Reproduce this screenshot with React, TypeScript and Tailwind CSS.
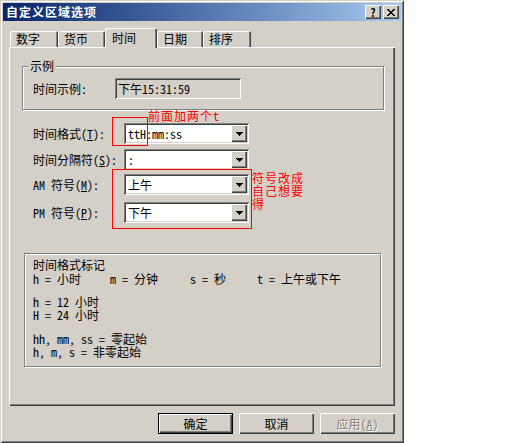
import type { FC, ReactNode } from "react";

const raised =
  "shadow-[inset_1px_1px_0_#fff,inset_-1px_-1px_0_#404040,inset_-2px_-2px_0_#808080]";
const sunken =
  "shadow-[inset_1px_1px_0_#808080,inset_-1px_-1px_0_#fff,inset_2px_2px_0_#404040,inset_-2px_-2px_0_#d4d0c8]";
const etched = "border border-[#808080] shadow-[inset_1px_1px_0_#fff,1px_1px_0_#fff]";

const TitleButton: FC<{ children: ReactNode }> = ({ children }) => (
  <div className={`flex h-[14px] w-[16px] items-center justify-center bg-[#d4d0c8] ${raised}`}>
    {children}
  </div>
);

const Arrow: FC = () => (
  <svg width="7" height="4" viewBox="0 0 7 4" shapeRendering="crispEdges">
    <rect x="0" y="0" width="7" height="1" fill="#000" />
    <rect x="1" y="1" width="5" height="1" fill="#000" />
    <rect x="2" y="2" width="3" height="1" fill="#000" />
    <rect x="3" y="3" width="1" height="1" fill="#000" />
  </svg>
);

const Combo: FC<{ value: string }> = ({ value }) => (
  <div className={`flex h-[21px] w-[125px] items-center bg-white p-[2px] ${sunken}`}>
    <span className="flex-1 pl-[2px] text-[12px] leading-none">{value}</span>
    <div className={`flex h-[17px] w-[16px] items-center justify-center bg-[#d4d0c8] ${raised}`}>
      <Arrow />
    </div>
  </div>
);

type Tab = { label: string; width: string; active?: boolean };

const tabs: Tab[] = [
  { label: "数字", width: "w-[48px]" },
  { label: "货币", width: "w-[47px]" },
  { label: "时间", width: "w-[52px]", active: true },
  { label: "日期", width: "w-[46px]" },
  { label: "排序", width: "w-[48px]" },
];

const FieldRow: FC<{ label: ReactNode; value: string; gap: string }> = ({ label, value, gap }) => (
  <div className={`flex h-[21px] items-center ${gap}`}>
    <span className="w-[91px] text-[12px] leading-none">{label}</span>
    <Combo value={value} />
  </div>
);

const Button: FC<{ children: ReactNode; primary?: boolean; disabled?: boolean }> = ({
  children,
  primary,
  disabled,
}) => (
  <div
    className={`flex h-[21px] w-[75px] items-center justify-center bg-[#d4d0c8] text-[12px] leading-none ${
      primary
        ? "shadow-[inset_0_0_0_1px_#000,inset_2px_2px_0_#fff,inset_-2px_-2px_0_#404040,inset_-3px_-3px_0_#808080]"
        : raised
    } ${disabled ? "text-[#808080] [text-shadow:1px_1px_0_#fff]" : "text-black"}`}
  >
    {children}
  </div>
);

export default function App() {
  return (
    <div className="min-h-[443px] bg-white font-[family-name:'Noto_Sans_Mono_CJK_SC','Noto_Sans_CJK_SC',sans-serif] text-black">
      <div className="relative flex h-[443px] w-[404px] flex-col bg-[#d4d0c8] p-[3px] shadow-[inset_1px_1px_0_#d4d0c8,inset_-1px_-1px_0_#404040,inset_2px_2px_0_#fff,inset_-2px_-2px_0_#808080]">
        {/* title bar */}
        <div className="flex h-[18px] items-center bg-linear-to-r from-[#0a246a] to-[#a6caf0] pl-[3px] pr-[2px]">
          <span className="text-[12px] font-bold leading-none tracking-[1px] text-white">自定义区域选项</span>
          <div className="ml-auto flex gap-[2px]">
            <TitleButton>
              <span className="text-[11px] font-bold leading-none">?</span>
            </TitleButton>
            <TitleButton>
              <svg width="8" height="7" viewBox="0 0 8 7" shapeRendering="crispEdges">
                <path
                  d="M0 0h2v1h-2zM6 0h2v1h-2zM1 1h2v1h-2zM5 1h2v1h-2zM2 2h4v1h-4zM3 3h2v1h-2zM2 4h4v1h-4zM1 5h2v1h-2zM5 5h2v1h-2zM0 6h2v1h-2zM6 6h2v1h-2z"
                  fill="#000"
                />
              </svg>
            </TitleButton>
          </div>
        </div>

        {/* tabs */}
        <div className="mx-[6px] mt-[7px] flex h-[19px] items-end pl-[1px]">
          {tabs.map((t) => (
            <div
              key={t.label}
              className={`${t.width} flex items-center bg-[#d4d0c8] pl-[6px] text-[12px] leading-none rounded-t-[2px] shadow-[inset_1px_1px_0_#fff,inset_-1px_0_0_#404040,inset_-2px_0_0_#808080] ${
                t.active ? "relative z-10 -mb-px h-[20px] pl-[7px]" : "h-[16px]"
              }`}
            >
              {t.label}
            </div>
          ))}
        </div>

        {/* panel */}
        <div className={`mx-[6px] flex h-[359px] flex-col ${raised}`}>
          <div className={`relative ml-[13px] mt-[19px] h-[44px] w-[362px] ${etched}`}>
            <span className="absolute left-[5px] top-[-7px] bg-[#d4d0c8] px-[2px] text-[12px] leading-none">示例</span>
            <div className="flex items-center pl-[10px] pt-[11px]">
              <span className="w-[82px] text-[12px] leading-none">时间示例:</span>
              <div className={`flex h-[21px] w-[126px] items-center pl-[3px] text-[12px] leading-none ${sunken}`}>
                下午15:31:59
              </div>
            </div>
          </div>

          <div className="mt-[13px] flex flex-col pl-[24px]">
            <FieldRow
              gap=""
              label={
                <>
                  时间格式(<u>T</u>):
                </>
              }
              value="ttH:mm:ss"
            />
            <FieldRow
              gap="mt-[5px]"
              label={
                <>
                  时间分隔符(<u>S</u>):
                </>
              }
              value=":"
            />
            <FieldRow
              gap="mt-[4px]"
              label={
                <>
                  AM 符号(<u>M</u>):
                </>
              }
              value="上午"
            />
            <FieldRow
              gap="mt-[7px]"
              label={
                <>
                  PM 符号(<u>P</u>):
                </>
              }
              value="下午"
            />
          </div>

          <div className={`ml-[15px] mt-[30px] h-[114px] w-[357px] pl-[8px] pt-[4px] text-[12px] leading-[13px] ${etched}`}>
            <div>时间格式标记</div>
            <div className="mt-[1px] flex">
              <span className="w-[77px]">h = 小时</span>
              <span className="w-[80px]">m = 分钟</span>
              <span className="w-[67px]">s = 秒</span>
              <span>t = 上午或下午</span>
            </div>
            <div className="mt-[10px]">h = 12 小时</div>
            <div>H = 24 小时</div>
            <div className="mt-[11px]">hh, mm, ss = 零起始</div>
            <div>h, m, s = 非零起始</div>
          </div>
        </div>

        {/* buttons */}
        <div className="mr-[6px] mt-[7px] flex justify-end gap-[6px]">
          <Button primary>确定</Button>
          <Button>取消</Button>
          <Button disabled>
            应用(<u>A</u>)
          </Button>
        </div>

        {/* red annotations */}
        <div className="absolute left-[112px] top-[117px] h-[29px] w-[36px] border border-[#ff0000]" />
        <span className="absolute left-[148px] top-[109px] text-[12px] leading-[13px] tracking-[1px] text-[#ff0000]">
          前面加两个t
        </span>
        <div className="absolute left-[112px] top-[169px] h-[60px] w-[140px] border border-[#ff0000]" />
        <span className="absolute left-[252px] top-[171px] text-[12px] leading-[13px] tracking-[1px] text-[#ff0000]">
          符号改成
          <br />
          自己想要
          <br />得
        </span>
      </div>
    </div>
  );
}
